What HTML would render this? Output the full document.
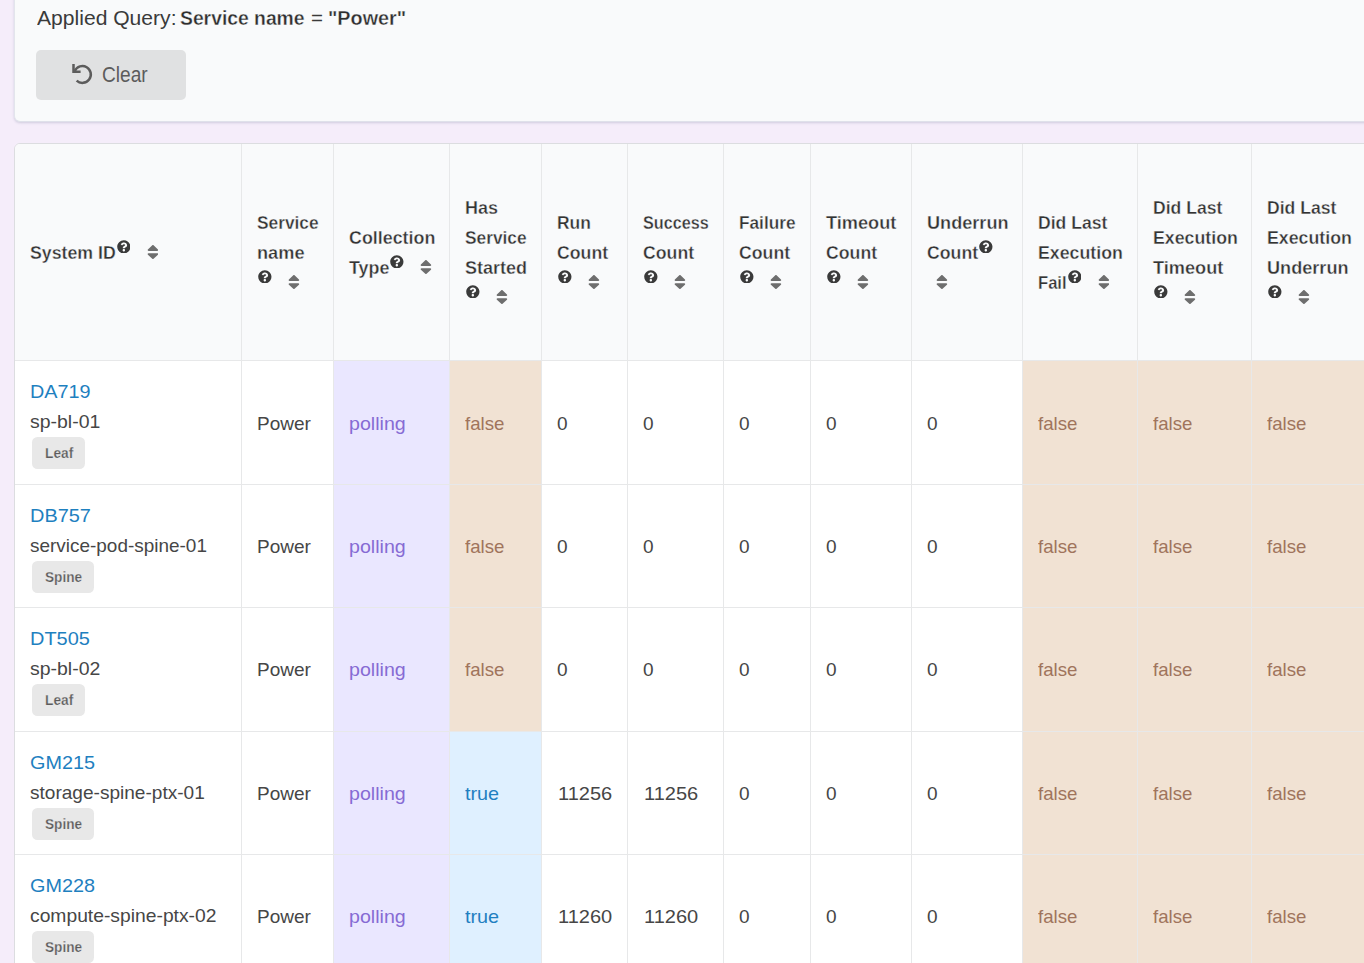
<!DOCTYPE html>
<html lang="en"><head><meta charset="utf-8"><title>Service Power</title>
<style>
html,body{margin:0;padding:0}
body{width:1364px;height:963px;overflow:hidden;position:relative;background:#f5edfa;font-family:"Liberation Sans",sans-serif;font-size:19px;line-height:30px;color:#333}
.panel{position:absolute;box-sizing:border-box;left:14px;top:-20px;width:1400px;height:142px;background:#f9fafb;border:1px solid #e3e5ec;border-bottom-color:#dfe1ea;border-radius:6px;box-shadow:0 1px 2.5px rgba(60,70,110,.2)}
.aq{position:absolute;left:-1px;top:21px;font-size:21px;line-height:30px;white-space:nowrap;color:#3a3a3a}
.a{position:absolute;top:0.5px;transform-origin:0 50%;white-space:nowrap}
.a.b{font-weight:bold;color:#2e2e2e;-webkit-text-stroke:0.35px #f9fafb}
.btn{position:absolute;left:21px;top:69px;width:150px;height:50px;border-radius:5px;background:#e0e1e2;color:#5c5c5c;font-size:21.5px}
.cl{position:absolute;left:66px;top:10px;line-height:30px;transform-origin:0 50%}
.undo{position:absolute;left:0;top:0;width:150px;height:50px;fill:none;stroke:#5c5c5c;stroke-width:2.5}
.tw{position:absolute;left:14px;top:143px;width:1400px;height:900px;background:#fff;border:1px solid #dcdde0;border-radius:6px 0 0 0;overflow:hidden}
table{border-collapse:separate;border-spacing:0;table-layout:fixed;width:1354px}
th,td{box-sizing:border-box;padding:0 15px;text-align:left;vertical-align:middle;border-left:1px solid #e7e8e9;white-space:nowrap;font-weight:normal}
th:first-child,td:first-child{border-left:none}
th{height:216px;background:#f9fafb;font-weight:bold;color:#333}
td{border-top:1px solid #e7e8e9;color:#464646;vertical-align:top;padding-top:47px}
.r0 td{padding-top:48px}
td.sys,.r0 td.sys{padding-top:15px}
.t{display:inline-block;transform-origin:0 50%;white-space:nowrap;vertical-align:baseline}
.sys .t{position:relative;top:0}
th .t{position:relative;top:0;-webkit-text-stroke:0.35px #f9fafb}
svg.q{width:13.7px;height:13.7px;fill:#3a3a3a;vertical-align:baseline;position:relative;top:-4.7px;margin-left:1.1px}
svg.s{width:11.85px;height:18.1px;fill:#6e6e6e;vertical-align:baseline;position:relative;top:2.6px;margin-left:16.2px}
.sp{display:inline-block;width:0}
.sp + svg.s{margin-left:9.3px}
.lk{color:#1e80bf}
.lab{display:inline-block;box-sizing:border-box;margin:1px 0 0 2px;height:32px;line-height:32px;padding:0 0 0 12.8px;border-radius:5.5px;background:#e8e8e8;color:#5c5c5c;font-weight:bold;font-size:15.2px;vertical-align:top;position:relative;top:-0.5px}
.lab span{display:inline-block;transform-origin:0 50%;position:relative;top:0;-webkit-text-stroke:0.25px #e8e8e8}
td.violet{background:#eae7ff;color:#866bd4}
td.brown{background:#f1e2d3;color:#a0745c}
td.blue{background:#dff0ff;color:#1f80c1}

</style></head>
<body>
<div class="panel">
 <div class="aq"><span class="a " style="left:23.10px;transform:scaleX(1.0043)">Applied Query:</span><span class="a b" style="left:166.14px;transform:scaleX(0.9196)">Service name</span><span class="a " style="left:297.32px;transform:scaleX(0.9762)">=</span><span class="a b" style="left:313.52px;transform:scaleX(0.9414)">&quot;Power&quot;</span></div>
 <div class="btn"><svg class="undo" viewBox="0 0 150 50"><path d="M38.75 20.9 A8.43 8.43 0 1 1 40.64 30.63"/><path d="M37.5 14.1 V21.7 H44.6"/></svg><span class="cl" style="transform:scaleX(0.8899)">Clear</span></div>
</div>
<div class="tw"><table>
<colgroup><col style="width:226px"><col style="width:92px"><col style="width:116px"><col style="width:92px"><col style="width:86px"><col style="width:96px"><col style="width:87px"><col style="width:101px"><col style="width:111px"><col style="width:115px"><col style="width:114px"><col style="width:118px"></colgroup>
<thead><tr>
<th><div class="hl"><span class="t" style="width:85.68px;transform:translateY(0.5px) scaleX(0.9326)">System ID</span><svg class="q" viewBox="0 0 512 512"><path d="M504 256c0 136.997-111.043 248-248 248S8 392.997 8 256C8 119.083 119.043 8 256 8s248 111.083 248 248zM262.655 90c-54.497 0-89.255 22.957-116.549 63.758-3.536 5.286-2.353 12.415 2.715 16.258l34.699 26.31c5.205 3.947 12.621 3.008 16.665-2.122 17.864-22.658 30.113-35.797 57.303-35.797 20.429 0 45.698 13.148 45.698 32.958 0 14.976-12.363 22.667-32.534 33.976C247.128 238.528 216 254.941 216 296v4c0 6.627 5.373 12 12 12h56c6.627 0 12-5.373 12-12v-1.333c0-28.462 83.186-29.647 83.186-106.667 0-58.002-60.165-102-116.531-102zM256 338c-25.365 0-46 20.635-46 46 0 25.364 20.635 46 46 46s46-20.636 46-46c0-25.365-20.635-46-46-46z"/></svg><svg class="s" viewBox="0 0 320 512" preserveAspectRatio="none"><path d="M41 288h238c21.4 0 32.1 25.9 17 41L177 448c-9.4 9.4-24.6 9.4-33.9 0L24 329c-15.1-15.1-4.4-41 17-41zm255-105L177 64c-9.4-9.4-24.6-9.4-33.9 0L24 183c-15.1 15.1-4.4 41 17 41h238c21.4 0 32.1-25.9 17-41z"/></svg></div></th>
<th><div class="hl"><span class="t" style="width:61.63px;transform:translateY(0.5px) scaleX(0.9113)">Service</span><br><span class="t" style="width:47.51px;transform:translateY(0.5px) scaleX(0.9571)">name</span><br><svg class="q" viewBox="0 0 512 512"><path d="M504 256c0 136.997-111.043 248-248 248S8 392.997 8 256C8 119.083 119.043 8 256 8s248 111.083 248 248zM262.655 90c-54.497 0-89.255 22.957-116.549 63.758-3.536 5.286-2.353 12.415 2.715 16.258l34.699 26.31c5.205 3.947 12.621 3.008 16.665-2.122 17.864-22.658 30.113-35.797 57.303-35.797 20.429 0 45.698 13.148 45.698 32.958 0 14.976-12.363 22.667-32.534 33.976C247.128 238.528 216 254.941 216 296v4c0 6.627 5.373 12 12 12h56c6.627 0 12-5.373 12-12v-1.333c0-28.462 83.186-29.647 83.186-106.667 0-58.002-60.165-102-116.531-102zM256 338c-25.365 0-46 20.635-46 46 0 25.364 20.635 46 46 46s46-20.636 46-46c0-25.365-20.635-46-46-46z"/></svg><svg class="s" viewBox="0 0 320 512" preserveAspectRatio="none"><path d="M41 288h238c21.4 0 32.1 25.9 17 41L177 448c-9.4 9.4-24.6 9.4-33.9 0L24 329c-15.1-15.1-4.4-41 17-41zm255-105L177 64c-9.4-9.4-24.6-9.4-33.9 0L24 183c-15.1 15.1-4.4 41 17 41h238c21.4 0 32.1-25.9 17-41z"/></svg></div></th>
<th><div class="hl"><span class="t" style="width:86.33px;transform:translateY(0.5px) scaleX(0.9400)">Collection</span><br><span class="t" style="width:40.38px;transform:translateY(0.5px) scaleX(0.9405)">Type</span><svg class="q" viewBox="0 0 512 512"><path d="M504 256c0 136.997-111.043 248-248 248S8 392.997 8 256C8 119.083 119.043 8 256 8s248 111.083 248 248zM262.655 90c-54.497 0-89.255 22.957-116.549 63.758-3.536 5.286-2.353 12.415 2.715 16.258l34.699 26.31c5.205 3.947 12.621 3.008 16.665-2.122 17.864-22.658 30.113-35.797 57.303-35.797 20.429 0 45.698 13.148 45.698 32.958 0 14.976-12.363 22.667-32.534 33.976C247.128 238.528 216 254.941 216 296v4c0 6.627 5.373 12 12 12h56c6.627 0 12-5.373 12-12v-1.333c0-28.462 83.186-29.647 83.186-106.667 0-58.002-60.165-102-116.531-102zM256 338c-25.365 0-46 20.635-46 46 0 25.364 20.635 46 46 46s46-20.636 46-46c0-25.365-20.635-46-46-46z"/></svg><svg class="s" viewBox="0 0 320 512" preserveAspectRatio="none"><path d="M41 288h238c21.4 0 32.1 25.9 17 41L177 448c-9.4 9.4-24.6 9.4-33.9 0L24 329c-15.1-15.1-4.4-41 17-41zm255-105L177 64c-9.4-9.4-24.6-9.4-33.9 0L24 183c-15.1 15.1-4.4 41 17 41h238c21.4 0 32.1-25.9 17-41z"/></svg></div></th>
<th><div class="hl"><span class="t" style="width:32.96px;transform:translateY(0.5px) scaleX(0.9455)">Has</span><br><span class="t" style="width:61.63px;transform:translateY(0.5px) scaleX(0.9113)">Service</span><br><span class="t" style="width:62.03px;transform:translateY(0.5px) scaleX(0.9475)">Started</span><br><svg class="q" viewBox="0 0 512 512"><path d="M504 256c0 136.997-111.043 248-248 248S8 392.997 8 256C8 119.083 119.043 8 256 8s248 111.083 248 248zM262.655 90c-54.497 0-89.255 22.957-116.549 63.758-3.536 5.286-2.353 12.415 2.715 16.258l34.699 26.31c5.205 3.947 12.621 3.008 16.665-2.122 17.864-22.658 30.113-35.797 57.303-35.797 20.429 0 45.698 13.148 45.698 32.958 0 14.976-12.363 22.667-32.534 33.976C247.128 238.528 216 254.941 216 296v4c0 6.627 5.373 12 12 12h56c6.627 0 12-5.373 12-12v-1.333c0-28.462 83.186-29.647 83.186-106.667 0-58.002-60.165-102-116.531-102zM256 338c-25.365 0-46 20.635-46 46 0 25.364 20.635 46 46 46s46-20.636 46-46c0-25.365-20.635-46-46-46z"/></svg><svg class="s" viewBox="0 0 320 512" preserveAspectRatio="none"><path d="M41 288h238c21.4 0 32.1 25.9 17 41L177 448c-9.4 9.4-24.6 9.4-33.9 0L24 329c-15.1-15.1-4.4-41 17-41zm255-105L177 64c-9.4-9.4-24.6-9.4-33.9 0L24 183c-15.1 15.1-4.4 41 17 41h238c21.4 0 32.1-25.9 17-41z"/></svg></div></th>
<th><div class="hl"><span class="t" style="width:33.94px;transform:translateY(0.5px) scaleX(0.9188)">Run</span><br><span class="t" style="width:51.12px;transform:translateY(0.5px) scaleX(0.9315)">Count</span><br><svg class="q" viewBox="0 0 512 512"><path d="M504 256c0 136.997-111.043 248-248 248S8 392.997 8 256C8 119.083 119.043 8 256 8s248 111.083 248 248zM262.655 90c-54.497 0-89.255 22.957-116.549 63.758-3.536 5.286-2.353 12.415 2.715 16.258l34.699 26.31c5.205 3.947 12.621 3.008 16.665-2.122 17.864-22.658 30.113-35.797 57.303-35.797 20.429 0 45.698 13.148 45.698 32.958 0 14.976-12.363 22.667-32.534 33.976C247.128 238.528 216 254.941 216 296v4c0 6.627 5.373 12 12 12h56c6.627 0 12-5.373 12-12v-1.333c0-28.462 83.186-29.647 83.186-106.667 0-58.002-60.165-102-116.531-102zM256 338c-25.365 0-46 20.635-46 46 0 25.364 20.635 46 46 46s46-20.636 46-46c0-25.365-20.635-46-46-46z"/></svg><svg class="s" viewBox="0 0 320 512" preserveAspectRatio="none"><path d="M41 288h238c21.4 0 32.1 25.9 17 41L177 448c-9.4 9.4-24.6 9.4-33.9 0L24 329c-15.1-15.1-4.4-41 17-41zm255-105L177 64c-9.4-9.4-24.6-9.4-33.9 0L24 183c-15.1 15.1-4.4 41 17 41h238c21.4 0 32.1-25.9 17-41z"/></svg></div></th>
<th><div class="hl"><span class="t" style="width:65.66px;transform:translateY(0.5px) scaleX(0.8513)">Success</span><br><span class="t" style="width:51.12px;transform:translateY(0.5px) scaleX(0.9315)">Count</span><br><svg class="q" viewBox="0 0 512 512"><path d="M504 256c0 136.997-111.043 248-248 248S8 392.997 8 256C8 119.083 119.043 8 256 8s248 111.083 248 248zM262.655 90c-54.497 0-89.255 22.957-116.549 63.758-3.536 5.286-2.353 12.415 2.715 16.258l34.699 26.31c5.205 3.947 12.621 3.008 16.665-2.122 17.864-22.658 30.113-35.797 57.303-35.797 20.429 0 45.698 13.148 45.698 32.958 0 14.976-12.363 22.667-32.534 33.976C247.128 238.528 216 254.941 216 296v4c0 6.627 5.373 12 12 12h56c6.627 0 12-5.373 12-12v-1.333c0-28.462 83.186-29.647 83.186-106.667 0-58.002-60.165-102-116.531-102zM256 338c-25.365 0-46 20.635-46 46 0 25.364 20.635 46 46 46s46-20.636 46-46c0-25.365-20.635-46-46-46z"/></svg><svg class="s" viewBox="0 0 320 512" preserveAspectRatio="none"><path d="M41 288h238c21.4 0 32.1 25.9 17 41L177 448c-9.4 9.4-24.6 9.4-33.9 0L24 329c-15.1-15.1-4.4-41 17-41zm255-105L177 64c-9.4-9.4-24.6-9.4-33.9 0L24 183c-15.1 15.1-4.4 41 17 41h238c21.4 0 32.1-25.9 17-41z"/></svg></div></th>
<th><div class="hl"><span class="t" style="width:56.54px;transform:translateY(0.5px) scaleX(0.9074)">Failure</span><br><span class="t" style="width:51.12px;transform:translateY(0.5px) scaleX(0.9315)">Count</span><br><svg class="q" viewBox="0 0 512 512"><path d="M504 256c0 136.997-111.043 248-248 248S8 392.997 8 256C8 119.083 119.043 8 256 8s248 111.083 248 248zM262.655 90c-54.497 0-89.255 22.957-116.549 63.758-3.536 5.286-2.353 12.415 2.715 16.258l34.699 26.31c5.205 3.947 12.621 3.008 16.665-2.122 17.864-22.658 30.113-35.797 57.303-35.797 20.429 0 45.698 13.148 45.698 32.958 0 14.976-12.363 22.667-32.534 33.976C247.128 238.528 216 254.941 216 296v4c0 6.627 5.373 12 12 12h56c6.627 0 12-5.373 12-12v-1.333c0-28.462 83.186-29.647 83.186-106.667 0-58.002-60.165-102-116.531-102zM256 338c-25.365 0-46 20.635-46 46 0 25.364 20.635 46 46 46s46-20.636 46-46c0-25.365-20.635-46-46-46z"/></svg><svg class="s" viewBox="0 0 320 512" preserveAspectRatio="none"><path d="M41 288h238c21.4 0 32.1 25.9 17 41L177 448c-9.4 9.4-24.6 9.4-33.9 0L24 329c-15.1-15.1-4.4-41 17-41zm255-105L177 64c-9.4-9.4-24.6-9.4-33.9 0L24 183c-15.1 15.1-4.4 41 17 41h238c21.4 0 32.1-25.9 17-41z"/></svg></div></th>
<th><div class="hl"><span class="t" style="width:70.32px;transform:translateY(0.5px) scaleX(0.9562)">Timeout</span><br><span class="t" style="width:51.12px;transform:translateY(0.5px) scaleX(0.9315)">Count</span><br><svg class="q" viewBox="0 0 512 512"><path d="M504 256c0 136.997-111.043 248-248 248S8 392.997 8 256C8 119.083 119.043 8 256 8s248 111.083 248 248zM262.655 90c-54.497 0-89.255 22.957-116.549 63.758-3.536 5.286-2.353 12.415 2.715 16.258l34.699 26.31c5.205 3.947 12.621 3.008 16.665-2.122 17.864-22.658 30.113-35.797 57.303-35.797 20.429 0 45.698 13.148 45.698 32.958 0 14.976-12.363 22.667-32.534 33.976C247.128 238.528 216 254.941 216 296v4c0 6.627 5.373 12 12 12h56c6.627 0 12-5.373 12-12v-1.333c0-28.462 83.186-29.647 83.186-106.667 0-58.002-60.165-102-116.531-102zM256 338c-25.365 0-46 20.635-46 46 0 25.364 20.635 46 46 46s46-20.636 46-46c0-25.365-20.635-46-46-46z"/></svg><svg class="s" viewBox="0 0 320 512" preserveAspectRatio="none"><path d="M41 288h238c21.4 0 32.1 25.9 17 41L177 448c-9.4 9.4-24.6 9.4-33.9 0L24 329c-15.1-15.1-4.4-41 17-41zm255-105L177 64c-9.4-9.4-24.6-9.4-33.9 0L24 183c-15.1 15.1-4.4 41 17 41h238c21.4 0 32.1-25.9 17-41z"/></svg></div></th>
<th><div class="hl"><span class="t" style="width:81.51px;transform:translateY(0.5px) scaleX(0.9533)">Underrun</span><br><span class="t" style="width:51.12px;transform:translateY(0.5px) scaleX(0.9315)">Count</span><svg class="q" viewBox="0 0 512 512"><path d="M504 256c0 136.997-111.043 248-248 248S8 392.997 8 256C8 119.083 119.043 8 256 8s248 111.083 248 248zM262.655 90c-54.497 0-89.255 22.957-116.549 63.758-3.536 5.286-2.353 12.415 2.715 16.258l34.699 26.31c5.205 3.947 12.621 3.008 16.665-2.122 17.864-22.658 30.113-35.797 57.303-35.797 20.429 0 45.698 13.148 45.698 32.958 0 14.976-12.363 22.667-32.534 33.976C247.128 238.528 216 254.941 216 296v4c0 6.627 5.373 12 12 12h56c6.627 0 12-5.373 12-12v-1.333c0-28.462 83.186-29.647 83.186-106.667 0-58.002-60.165-102-116.531-102zM256 338c-25.365 0-46 20.635-46 46 0 25.364 20.635 46 46 46s46-20.636 46-46c0-25.365-20.635-46-46-46z"/></svg><br><span class="sp"></span><svg class="s" viewBox="0 0 320 512" preserveAspectRatio="none"><path d="M41 288h238c21.4 0 32.1 25.9 17 41L177 448c-9.4 9.4-24.6 9.4-33.9 0L24 329c-15.1-15.1-4.4-41 17-41zm255-105L177 64c-9.4-9.4-24.6-9.4-33.9 0L24 183c-15.1 15.1-4.4 41 17 41h238c21.4 0 32.1-25.9 17-41z"/></svg></div></th>
<th><div class="hl"><span class="t" style="width:69.34px;transform:translateY(0.5px) scaleX(0.9252)">Did Last</span><br><span class="t" style="width:84.86px;transform:translateY(0.5px) scaleX(0.9345)">Execution</span><br><span class="t" style="width:28.57px;transform:translateY(0.5px) scaleX(0.8727)">Fail</span><svg class="q" viewBox="0 0 512 512"><path d="M504 256c0 136.997-111.043 248-248 248S8 392.997 8 256C8 119.083 119.043 8 256 8s248 111.083 248 248zM262.655 90c-54.497 0-89.255 22.957-116.549 63.758-3.536 5.286-2.353 12.415 2.715 16.258l34.699 26.31c5.205 3.947 12.621 3.008 16.665-2.122 17.864-22.658 30.113-35.797 57.303-35.797 20.429 0 45.698 13.148 45.698 32.958 0 14.976-12.363 22.667-32.534 33.976C247.128 238.528 216 254.941 216 296v4c0 6.627 5.373 12 12 12h56c6.627 0 12-5.373 12-12v-1.333c0-28.462 83.186-29.647 83.186-106.667 0-58.002-60.165-102-116.531-102zM256 338c-25.365 0-46 20.635-46 46 0 25.364 20.635 46 46 46s46-20.636 46-46c0-25.365-20.635-46-46-46z"/></svg><svg class="s" viewBox="0 0 320 512" preserveAspectRatio="none"><path d="M41 288h238c21.4 0 32.1 25.9 17 41L177 448c-9.4 9.4-24.6 9.4-33.9 0L24 329c-15.1-15.1-4.4-41 17-41zm255-105L177 64c-9.4-9.4-24.6-9.4-33.9 0L24 183c-15.1 15.1-4.4 41 17 41h238c21.4 0 32.1-25.9 17-41z"/></svg></div></th>
<th><div class="hl"><span class="t" style="width:69.34px;transform:translateY(0.5px) scaleX(0.9252)">Did Last</span><br><span class="t" style="width:84.86px;transform:translateY(0.5px) scaleX(0.9345)">Execution</span><br><span class="t" style="width:70.32px;transform:translateY(0.5px) scaleX(0.9562)">Timeout</span><br><svg class="q" viewBox="0 0 512 512"><path d="M504 256c0 136.997-111.043 248-248 248S8 392.997 8 256C8 119.083 119.043 8 256 8s248 111.083 248 248zM262.655 90c-54.497 0-89.255 22.957-116.549 63.758-3.536 5.286-2.353 12.415 2.715 16.258l34.699 26.31c5.205 3.947 12.621 3.008 16.665-2.122 17.864-22.658 30.113-35.797 57.303-35.797 20.429 0 45.698 13.148 45.698 32.958 0 14.976-12.363 22.667-32.534 33.976C247.128 238.528 216 254.941 216 296v4c0 6.627 5.373 12 12 12h56c6.627 0 12-5.373 12-12v-1.333c0-28.462 83.186-29.647 83.186-106.667 0-58.002-60.165-102-116.531-102zM256 338c-25.365 0-46 20.635-46 46 0 25.364 20.635 46 46 46s46-20.636 46-46c0-25.365-20.635-46-46-46z"/></svg><svg class="s" viewBox="0 0 320 512" preserveAspectRatio="none"><path d="M41 288h238c21.4 0 32.1 25.9 17 41L177 448c-9.4 9.4-24.6 9.4-33.9 0L24 329c-15.1-15.1-4.4-41 17-41zm255-105L177 64c-9.4-9.4-24.6-9.4-33.9 0L24 183c-15.1 15.1-4.4 41 17 41h238c21.4 0 32.1-25.9 17-41z"/></svg></div></th>
<th><div class="hl"><span class="t" style="width:69.34px;transform:translateY(0.5px) scaleX(0.9252)">Did Last</span><br><span class="t" style="width:84.86px;transform:translateY(0.5px) scaleX(0.9345)">Execution</span><br><span class="t" style="width:81.51px;transform:translateY(0.5px) scaleX(0.9533)">Underrun</span><br><svg class="q" viewBox="0 0 512 512"><path d="M504 256c0 136.997-111.043 248-248 248S8 392.997 8 256C8 119.083 119.043 8 256 8s248 111.083 248 248zM262.655 90c-54.497 0-89.255 22.957-116.549 63.758-3.536 5.286-2.353 12.415 2.715 16.258l34.699 26.31c5.205 3.947 12.621 3.008 16.665-2.122 17.864-22.658 30.113-35.797 57.303-35.797 20.429 0 45.698 13.148 45.698 32.958 0 14.976-12.363 22.667-32.534 33.976C247.128 238.528 216 254.941 216 296v4c0 6.627 5.373 12 12 12h56c6.627 0 12-5.373 12-12v-1.333c0-28.462 83.186-29.647 83.186-106.667 0-58.002-60.165-102-116.531-102zM256 338c-25.365 0-46 20.635-46 46 0 25.364 20.635 46 46 46s46-20.636 46-46c0-25.365-20.635-46-46-46z"/></svg><svg class="s" viewBox="0 0 320 512" preserveAspectRatio="none"><path d="M41 288h238c21.4 0 32.1 25.9 17 41L177 448c-9.4 9.4-24.6 9.4-33.9 0L24 329c-15.1-15.1-4.4-41 17-41zm255-105L177 64c-9.4-9.4-24.6-9.4-33.9 0L24 183c-15.1 15.1-4.4 41 17 41h238c21.4 0 32.1-25.9 17-41z"/></svg></div></th>
</tr></thead>
<tbody>
<tr class="r0" style="height:124px"><td class="sys"><span class="t lk" style="width:60.56px;transform:translateY(0.5px) scaleX(1.0422)">DA719</span><br><span class="t" style="width:70.34px;transform:translateY(0.7px) scaleX(1.0245)">sp-bl-01</span><br><span class="lab" style="width:53px"><span style="transform:scaleX(0.9046)">Leaf</span></span></td><td>Power</td><td class="violet"><span class="t" style="width:56.72px;transform:scaleX(1.0324)">polling</span></td><td class="brown"><span class="t" style="width:39.42px;transform:scaleX(0.9821)">false</span></td><td>0</td><td>0</td><td>0</td><td>0</td><td>0</td><td class="brown"><span class="t" style="width:39.42px;transform:scaleX(0.9821)">false</span></td><td class="brown"><span class="t" style="width:39.42px;transform:scaleX(0.9821)">false</span></td><td class="brown"><span class="t" style="width:39.42px;transform:scaleX(0.9821)">false</span></td></tr>
<tr class="r1" style="height:123px"><td class="sys"><span class="t lk" style="width:60.98px;transform:translateY(0.5px) scaleX(1.0493)">DB757</span><br><span class="t" style="width:176.92px;transform:translateY(0.7px) scaleX(0.9972)">service-pod-spine-01</span><br><span class="lab" style="width:62px"><span style="transform:scaleX(0.8980)">Spine</span></span></td><td>Power</td><td class="violet"><span class="t" style="width:56.72px;transform:scaleX(1.0324)">polling</span></td><td class="brown"><span class="t" style="width:39.42px;transform:scaleX(0.9821)">false</span></td><td>0</td><td>0</td><td>0</td><td>0</td><td>0</td><td class="brown"><span class="t" style="width:39.42px;transform:scaleX(0.9821)">false</span></td><td class="brown"><span class="t" style="width:39.42px;transform:scaleX(0.9821)">false</span></td><td class="brown"><span class="t" style="width:39.42px;transform:scaleX(0.9821)">false</span></td></tr>
<tr class="r2" style="height:124px"><td class="sys"><span class="t lk" style="width:59.90px;transform:translateY(0.5px) scaleX(1.0502)">DT505</span><br><span class="t" style="width:70.34px;transform:translateY(0.7px) scaleX(1.0245)">sp-bl-02</span><br><span class="lab" style="width:53px"><span style="transform:scaleX(0.9046)">Leaf</span></span></td><td>Power</td><td class="violet"><span class="t" style="width:56.72px;transform:scaleX(1.0324)">polling</span></td><td class="brown"><span class="t" style="width:39.42px;transform:scaleX(0.9821)">false</span></td><td>0</td><td>0</td><td>0</td><td>0</td><td>0</td><td class="brown"><span class="t" style="width:39.42px;transform:scaleX(0.9821)">false</span></td><td class="brown"><span class="t" style="width:39.42px;transform:scaleX(0.9821)">false</span></td><td class="brown"><span class="t" style="width:39.42px;transform:scaleX(0.9821)">false</span></td></tr>
<tr class="r3" style="height:123px"><td class="sys"><span class="t lk" style="width:64.99px;transform:translateY(0.5px) scaleX(1.0430)">GM215</span><br><span class="t" style="width:174.77px;transform:translateY(0.7px) scaleX(1.0029)">storage-spine-ptx-01</span><br><span class="lab" style="width:62px"><span style="transform:scaleX(0.8980)">Spine</span></span></td><td>Power</td><td class="violet"><span class="t" style="width:56.72px;transform:scaleX(1.0324)">polling</span></td><td class="blue"><span class="t" style="width:34.14px;transform:scaleX(1.0425)">true</span></td><td><span class="t" style="width:54.21px;transform:scaleX(1.0538);margin-left:0.8px">11256</span></td><td><span class="t" style="width:54.21px;transform:scaleX(1.0538);margin-left:0.8px">11256</span></td><td>0</td><td>0</td><td>0</td><td class="brown"><span class="t" style="width:39.42px;transform:scaleX(0.9821)">false</span></td><td class="brown"><span class="t" style="width:39.42px;transform:scaleX(0.9821)">false</span></td><td class="brown"><span class="t" style="width:39.42px;transform:scaleX(0.9821)">false</span></td></tr>
<tr class="r4" style="height:124px"><td class="sys"><span class="t lk" style="width:64.99px;transform:translateY(0.5px) scaleX(1.0430)">GM228</span><br><span class="t" style="width:186.49px;transform:translateY(0.7px) scaleX(1.0148)">compute-spine-ptx-02</span><br><span class="lab" style="width:62px"><span style="transform:scaleX(0.8980)">Spine</span></span></td><td>Power</td><td class="violet"><span class="t" style="width:56.72px;transform:scaleX(1.0324)">polling</span></td><td class="blue"><span class="t" style="width:34.14px;transform:scaleX(1.0425)">true</span></td><td><span class="t" style="width:54.21px;transform:scaleX(1.0538);margin-left:0.8px">11260</span></td><td><span class="t" style="width:54.21px;transform:scaleX(1.0538);margin-left:0.8px">11260</span></td><td>0</td><td>0</td><td>0</td><td class="brown"><span class="t" style="width:39.42px;transform:scaleX(0.9821)">false</span></td><td class="brown"><span class="t" style="width:39.42px;transform:scaleX(0.9821)">false</span></td><td class="brown"><span class="t" style="width:39.42px;transform:scaleX(0.9821)">false</span></td></tr>
</tbody></table></div>
</body></html>
